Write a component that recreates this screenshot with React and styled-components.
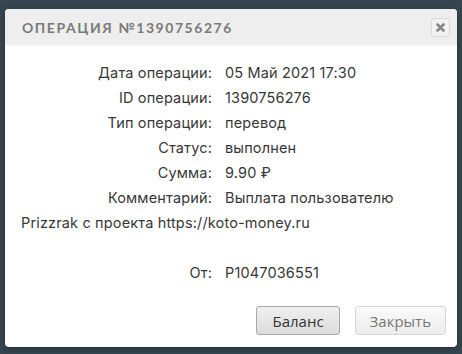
import React from "react";
import styled, { createGlobalStyle } from "styled-components";

const GlobalStyle = createGlobalStyle`
  html, body {
    margin: 0;
    padding: 0;
    background: #36464e;
  }
  body {
    padding: 9px 5px;
  }
`;

const Dialog = styled.div`
  width: 452px;
  height: 338px;
  background: #fff;
  border-radius: 4px;
  overflow: hidden;
  display: flex;
  flex-direction: column;
  box-shadow: 0 2px 6px rgba(0, 0, 0, 0.3);
`;

const Header = styled.div`
  height: 36px;
  flex: none;
  background: #eeeeee;
  display: flex;
  align-items: center;
  justify-content: space-between;
  padding: 0 7px 0 17px;
`;

const Title = styled.h2`
  margin: 0;
  font-family: "Lato", "Noto Sans", sans-serif;
  font-weight: 700;
  font-size: 14px;
  letter-spacing: 1.55px;
  color: #7a7a7a;
  text-transform: uppercase;
`;

const CloseButton = styled.button`
  width: 19px;
  height: 19px;
  padding: 0;
  border: 1px solid #d9d9d9;
  border-radius: 3px;
  background: #f2f2f2;
  display: flex;
  align-items: center;
  justify-content: center;
  cursor: pointer;
`;

const Body = styled.div`
  flex: 1;
  padding: 15px 16px 0;
  font-family: "Inter", "Noto Sans", sans-serif;
  font-size: 14.5px;
  letter-spacing: 0.15px;
  line-height: 25px;
  color: #383838;
`;

const Row = styled.div`
  min-height: 25px;
`;

const Label = styled.span`
  display: inline-block;
  width: 191px;
  margin-right: 13px;
  text-align: right;
`;

const Value = styled.span``;

const Footer = styled.div`
  display: flex;
  justify-content: flex-end;
  gap: 15px;
  padding: 0 11px 12px;
`;

const Button = styled.button`
  height: 29px;
  padding: 0 ${({ primary }) => (primary ? 15 : 14)}px;
  font-family: "Open Sans", "Noto Sans", sans-serif;
  font-size: 15px;
  border-radius: 3px;
  cursor: pointer;
  color: ${({ primary }) => (primary ? "#333" : "#777")};
  border: 1px solid ${({ primary }) => (primary ? "#a8a8a8" : "#d6d6d6")};
  background: ${({ primary }) =>
    primary
      ? "linear-gradient(#f0f0f0, #dcdcdc)"
      : "linear-gradient(#fafafa, #ececec)"};
`;

const rows = [
  ["Дата операции:", "05 Май 2021 17:30"],
  ["ID операции:", "1390756276"],
  ["Тип операции:", "перевод"],
  ["Статус:", "выполнен"],
  ["Сумма:", "9.90 ₽"],
  ["Комментарий:", "Выплата пользователю Prizzrak с проекта https://koto-money.ru"],
];

const App = () => (
  <>
    <GlobalStyle />
    <Dialog>
      <Header>
        <Title>Операция №1390756276</Title>
        <CloseButton aria-label="close">
          <svg width="9" height="9" viewBox="0 0 9 9">
            <path d="M1.5 1.5 L7.5 7.5 M7.5 1.5 L1.5 7.5" stroke="#858585" strokeWidth="2.6" strokeLinecap="round" />
          </svg>
        </CloseButton>
      </Header>
      <Body>
        {rows.map(([label, value]) => (
          <Row key={label}>
            <Label>{label}</Label>
            <Value>{value}</Value>
          </Row>
        ))}
        <Row />
        <Row>
          <Label>От:</Label>
          <Value>P1047036551</Value>
        </Row>
      </Body>
      <Footer>
        <Button primary>Баланс</Button>
        <Button>Закрыть</Button>
      </Footer>
    </Dialog>
  </>
);

export default App;
